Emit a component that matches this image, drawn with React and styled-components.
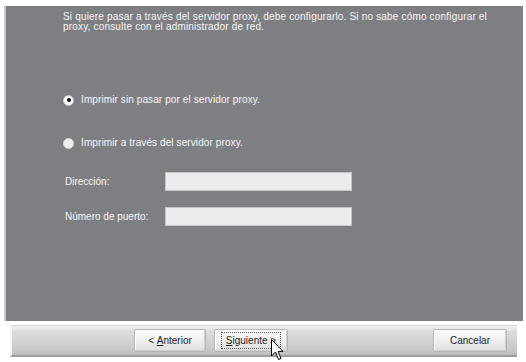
import React from 'react';
import styled, { createGlobalStyle } from 'styled-components';

const GlobalStyle = createGlobalStyle`
  html, body {
    margin: 0;
    padding: 0;
    background: #ffffff;
    font-family: 'Liberation Sans', Arial, sans-serif;
  }
`;

const Window = styled.div`
  position: relative;
  width: 526px;
  height: 362px;
  display: flex;
  flex-direction: column;
  background: #ffffff;
  overflow: hidden;
`;

const Panel = styled.div`
  margin: 6px 3px 0 4px;
  height: 315px;
  box-sizing: border-box;
  background: #7e7f83;
  border-left: 2px solid #c9c9cb;
  display: flex;
  flex-direction: column;
  padding: 6px 20px 0 57px;
  color: #f6f6f6;
  font-size: 10px;
`;

const Intro = styled.p`
  margin: 0;
  line-height: 10px;
  letter-spacing: 0.18px;
  white-space: nowrap;
`;

const RadioRow = styled.label`
  display: flex;
  align-items: center;
  gap: 7px;
  margin-top: ${p => p.$top}px;
  height: 12px;
  line-height: 12px;
  letter-spacing: 0.1px;
`;

const RadioDot = styled.span`
  width: 11px;
  height: 11px;
  border-radius: 50%;
  box-sizing: border-box;
  background: ${p => (p.$checked ? '#ffffff' : '#eeeeee')};
  border: 1px solid ${p => (p.$checked ? '#c4c4c4' : '#dadada')};
  display: flex;
  align-items: center;
  justify-content: center;

  &::after {
    content: '';
    width: 4px;
    height: 4px;
    border-radius: 50%;
    background: ${p => (p.$checked ? '#111111' : 'transparent')};
  }
`;

const FieldRow = styled.div`
  display: flex;
  align-items: center;
  margin-top: ${p => p.$top}px;
  margin-left: 2px;
`;

const FieldLabel = styled.span`
  width: 100px;
`;

const TextInput = styled.div`
  width: 187px;
  height: 19px;
  box-sizing: border-box;
  background: #ececec;
  border: 1px solid #c6c6c6;
`;

const Footer = styled.div`
  flex: 1;
  display: flex;
  flex-direction: column;
  padding: 4px 9px 0 10px;
  background: #ffffff;
`;

const ButtonBar = styled.div`
  height: 32px;
  box-sizing: border-box;
  display: flex;
  align-items: center;
  gap: 8px;
  padding: 0 10px 0 122px;
  background: linear-gradient(#f2f2f2 0%, #dcdcdc 20%, #c9c9c9 80%, #bdbdbd 100%);
  border-top: 1px solid #d6d6d6;
  border-left: 2px solid #f4f4f4;
  border-bottom: 2px solid #9d9d9d;
`;

const Spacer = styled.div`
  flex: 1;
`;

const Button = styled.div`
  position: relative;
  width: ${p => p.$w}px;
  height: 23px;
  box-sizing: border-box;
  display: flex;
  align-items: center;
  justify-content: center;
  font-size: 10px;
  color: #1c1c1c;
  white-space: pre;
  background: linear-gradient(#fbfbfb, #ececec 60%, #dedede);
  border: 1px solid #b5b5b5;
  border-radius: 2px;
  box-shadow: inset 1px 1px 0 #ffffff, inset -1px -1px 0 #d0d0d0;

  u {
    text-decoration: underline;
  }
`;

const FocusRing = styled.span`
  padding: 2px 4px;
  border: 1px dotted #555555;
`;

const Cursor = styled.svg`
  position: absolute;
  left: 271px;
  top: 339px;
`;

export default function App() {
  return (
    <>
      <GlobalStyle />
      <Window>
        <Panel>
          <Intro>
            Si quiere pasar a través del servidor proxy, debe configurarlo. Si no sabe cómo configurar el
            <br />
            proxy, consulte con el administrador de red.
          </Intro>
          <RadioRow $top={62}>
            <RadioDot $checked />
            Imprimir sin pasar por el servidor proxy.
          </RadioRow>
          <RadioRow $top={31}>
            <RadioDot />
            Imprimir a través del servidor proxy.
          </RadioRow>
          <FieldRow $top={23}>
            <FieldLabel>Dirección:</FieldLabel>
            <TextInput />
          </FieldRow>
          <FieldRow $top={16}>
            <FieldLabel>Número de puerto:</FieldLabel>
            <TextInput />
          </FieldRow>
        </Panel>
        <Footer>
          <ButtonBar>
            <Button $w={72}>{'< '}<u>A</u>nterior</Button>
            <Button $w={74}>
              <FocusRing><u>S</u>{'iguiente >'}</FocusRing>
            </Button>
            <Spacer />
            <Button $w={74}>Cancelar</Button>
          </ButtonBar>
        </Footer>
        <Cursor width="13" height="22" viewBox="0 0 13 22">
          <path
            d="M0.5 0.5 L0.5 17 L4.5 13 L7.5 20.5 L10 19.5 L7 12.5 L12 12.5 Z"
            fill="#ffffff"
            stroke="#000000"
            strokeWidth="1"
            strokeLinejoin="miter"
          />
        </Cursor>
      </Window>
    </>
  );
}
